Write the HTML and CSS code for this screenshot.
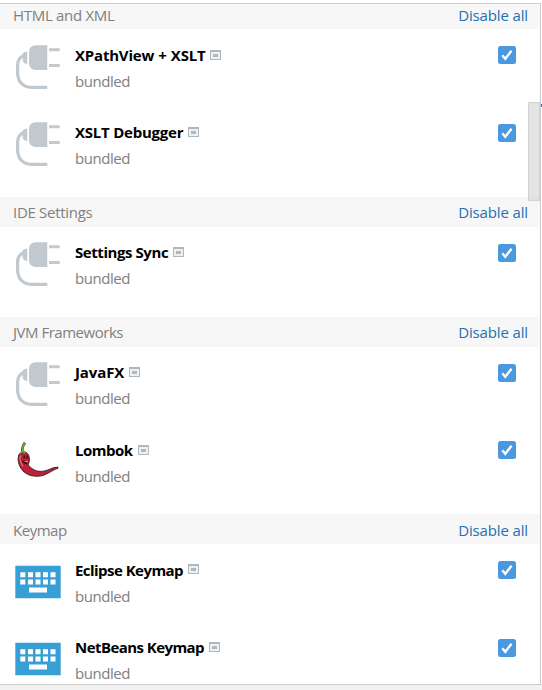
FILE: index.html
```html
<!DOCTYPE html>
<html lang="en">
<head>
<meta charset="utf-8">
<title>Plugins</title>
<link rel="stylesheet" href="styles.css">
</head>
<body>
<svg class="defs" width="0" height="0">
  <symbol id="plug" viewBox="0 0 48 48">
    <path fill="#c1c9cf" d="M22 2.300h11.300V27H22q-7 0-7-7V9.300q0-7 7-7zM35 5.300h10.700v3H35zM35 21h10.700v3H35zM8.500 10.500q2-2 4.800-2V21q-2.500 0-4.500-2.500z"/>
    <path fill="none" stroke="#c1c9cf" stroke-width="3.200" d="M10 12.500Q3.600 15 3.600 22v8.500Q4.500 44.400 19 44.400h14.300"/>
  </symbol>
  <symbol id="keyboard" viewBox="0 0 48 48">
    <path fill="#389fd6" d="M1.300 7.800h45.400v32.500H1.300z"/>
    <path fill="#fff" d="M6.300 14.200h5v5h-5zM14 14.200h5v5h-5zM21.500 14.200h5v5h-5zM29 14.200h5v5h-5zM36.500 14.200h5v5h-5zM6.300 21.400h5v5h-5zM14 21.400h5v5h-5zM21.500 21.400h5v5h-5zM29 21.400h5v5h-5zM36.500 21.400h5v5h-5zM15 29.400h18v5H15z"/>
  </symbol>
  <symbol id="chili" viewBox="0 0 48 48">
    <g transform="translate(0 2.500)">
    <path fill="#be1e37" stroke="#3b2529" stroke-width=".9" d="M7 12Q4 13.500 4 18.500C4.500 27 10 35.800 23 35.800C32 35.800 36 30.500 44 27.800V26.600Q40 26.600 35 29C27 32.300 20 31.500 14.200 24.500L15.500 20Q15.500 13.500 12 11.700Q9 10.500 7 12z"/>
    <path fill="none" stroke="#e2707c" stroke-width="1.200" d="M6.500 15Q5 20 9 26"/>
    <path fill="none" stroke="#344d20" stroke-width="2.600" d="M8.500 12Q7.500 7 11 2.300"/>
    <path fill="none" stroke="#74ac35" stroke-width="1.500" d="M6.500 12.200L8.800 11L12 12.200M8.700 11.500Q7.800 7 10.800 2.800"/>
    <path fill="#30191c" d="M9.500 15h1.600v3H9.500zM12.500 15h1.600v3h-1.600zM7.500 20L14.500 21L13 24Q9 23.500 7.500 20z"/>
    <path fill="#fff" d="M9.500 20.400l4.500 .7-.4 1z"/>
    </g>
  </symbol>
  <symbol id="window" viewBox="0 0 11 10">
    <path fill="#afb8bf" d="M0 0h11v10H0z"/>
    <path fill="#edf1f3" d="M1 2h9v7H1z"/>
    <path fill="#afb8bf" d="M3 4h5v3H3z"/>
  </symbol>
  <symbol id="check" viewBox="0 0 18 18">
    <rect width="18" height="18" rx="2.500" fill="#4a98df"/>
    <path fill="none" stroke="#fff" stroke-width="2.300" d="M4.300 9.300l3 3.500L13.500 4.700"/>
  </symbol>
</svg>
<main class="panel">
  <section class="group first">
    <header class="group-head"><span class="snug">HTML and XML</span><a>Disable all</a></header>
    <div class="row"><svg class="icon"><use href="#plug"/></svg><div class="info"><div class="title"><b class="w-xpath">XPathView + XSLT</b><svg class="mark"><use href="#window"/></svg></div><div class="sub">bundled</div></div><svg class="box"><use href="#check"/></svg></div>
    <div class="row lower"><svg class="icon"><use href="#plug"/></svg><div class="info"><div class="title"><b class="w-xslt">XSLT Debugger</b><svg class="mark"><use href="#window"/></svg></div><div class="sub">bundled</div></div><svg class="box"><use href="#check"/></svg></div>
  </section>
  <section class="group">
    <header class="group-head"><span class="snug">IDE Settings</span><a>Disable all</a></header>
    <div class="row lower raised"><svg class="icon"><use href="#plug"/></svg><div class="info"><div class="title"><b class="w-sync">Settings Sync</b><svg class="mark"><use href="#window"/></svg></div><div class="sub">bundled</div></div><svg class="box"><use href="#check"/></svg></div>
  </section>
  <section class="group">
    <header class="group-head"><span class="snugger">JVM Frameworks</span><a>Disable all</a></header>
    <div class="row lower raised"><svg class="icon"><use href="#plug"/></svg><div class="info"><div class="title"><b class="w-javafx">JavaFX</b><svg class="mark"><use href="#window"/></svg></div><div class="sub">bundled</div></div><svg class="box"><use href="#check"/></svg></div>
    <div class="row"><svg class="icon"><use href="#chili"/></svg><div class="info"><div class="title"><b class="w-lombok">Lombok</b><svg class="mark"><use href="#window"/></svg></div><div class="sub">bundled</div></div><svg class="box"><use href="#check"/></svg></div>
  </section>
  <section class="group last">
    <header class="group-head"><span class="snugger">Keymap</span><a>Disable all</a></header>
    <div class="row"><svg class="icon"><use href="#keyboard"/></svg><div class="info"><div class="title"><b class="w-eclipse">Eclipse Keymap</b><svg class="mark raised-mark"><use href="#window"/></svg></div><div class="sub">bundled</div></div><svg class="box"><use href="#check"/></svg></div>
    <div class="row lower"><svg class="icon"><use href="#keyboard"/></svg><div class="info"><div class="title"><b class="w-netbeans">NetBeans Keymap</b><svg class="mark"><use href="#window"/></svg></div><div class="sub">bundled</div></div><svg class="box"><use href="#check"/></svg></div>
  </section>
  <div class="thumb"></div>
</main>
<div class="edge"></div>
</body>
</html>
```
FILE: styles.css
```css
* { box-sizing: border-box; }
body {
  position: relative;
  margin: 0;
  height: 690px;
  overflow: hidden;
  padding-top: 3px;
  background: linear-gradient(#fff 684px, #f1f1f1 684px);
  font: 15px/20px "Open Sans", "Noto Sans", sans-serif;
}
.defs { position: absolute; }
.panel {
  position: relative;
  width: 541px;
  height: 682px;
  border: 1px solid #cdcdcd;
  border-left: 0;
  overflow: hidden;
}
.group { padding-bottom: 13px; }
.first { padding-bottom: 14px; }
.group-head {
  display: flex;
  justify-content: space-between;
  align-items: center;
  height: 30px;
  padding: 0 12px 0 13px;
  background: #f7f7f7;
  color: #808080;
}
.first .group-head { height: 25px; padding-bottom: 4px; }
.last .group-head { padding-top: 2px; }
.group-head a { color: #2470b3; letter-spacing: -.14px; }
.snug { letter-spacing: -.3px; }
.snugger { letter-spacing: -.48px; }
.row {
  display: flex;
  align-items: flex-start;
  height: 77px;
  padding: 14px 24.500px 0 14px;
}
.raised { padding-top: 13px; }
.icon { width: 48px; height: 48px; flex: none; }
.info { flex: 1; padding: 2px 0 0 13px; }
.title { display: flex; height: 26px; }
.title b { color: #000; font-weight: 700; white-space: nowrap; }
.w-xpath { letter-spacing: -.2px; word-spacing: .5px; }
.w-xslt { letter-spacing: -.23px; }
.w-sync { letter-spacing: -.43px; }
.w-javafx { letter-spacing: -.12px; }
.w-lombok { letter-spacing: -.5px; }
.w-eclipse { letter-spacing: -.54px; }
.w-netbeans { letter-spacing: -.56px; }
.mark { width: 11px; height: 10px; margin: 5px 0 0 5px; flex: none; }
.raised-mark { margin-top: 4px; }
.sub { color: #808080; letter-spacing: -.45px; }
.box { width: 18px; height: 18px; margin-top: 3px; flex: none; }
.lower .box { margin-top: 4px; }
.thumb {
  position: absolute;
  left: 528px;
  top: 98px;
  width: 12px;
  height: 99px;
  background: rgba(205, 205, 205, .55);
  border: 1px solid #d2d2d2;
}
.edge {
  position: absolute;
  left: 541px;
  top: 104px;
  width: 1px;
  height: 3px;
  background: #4472aa;
}
```
